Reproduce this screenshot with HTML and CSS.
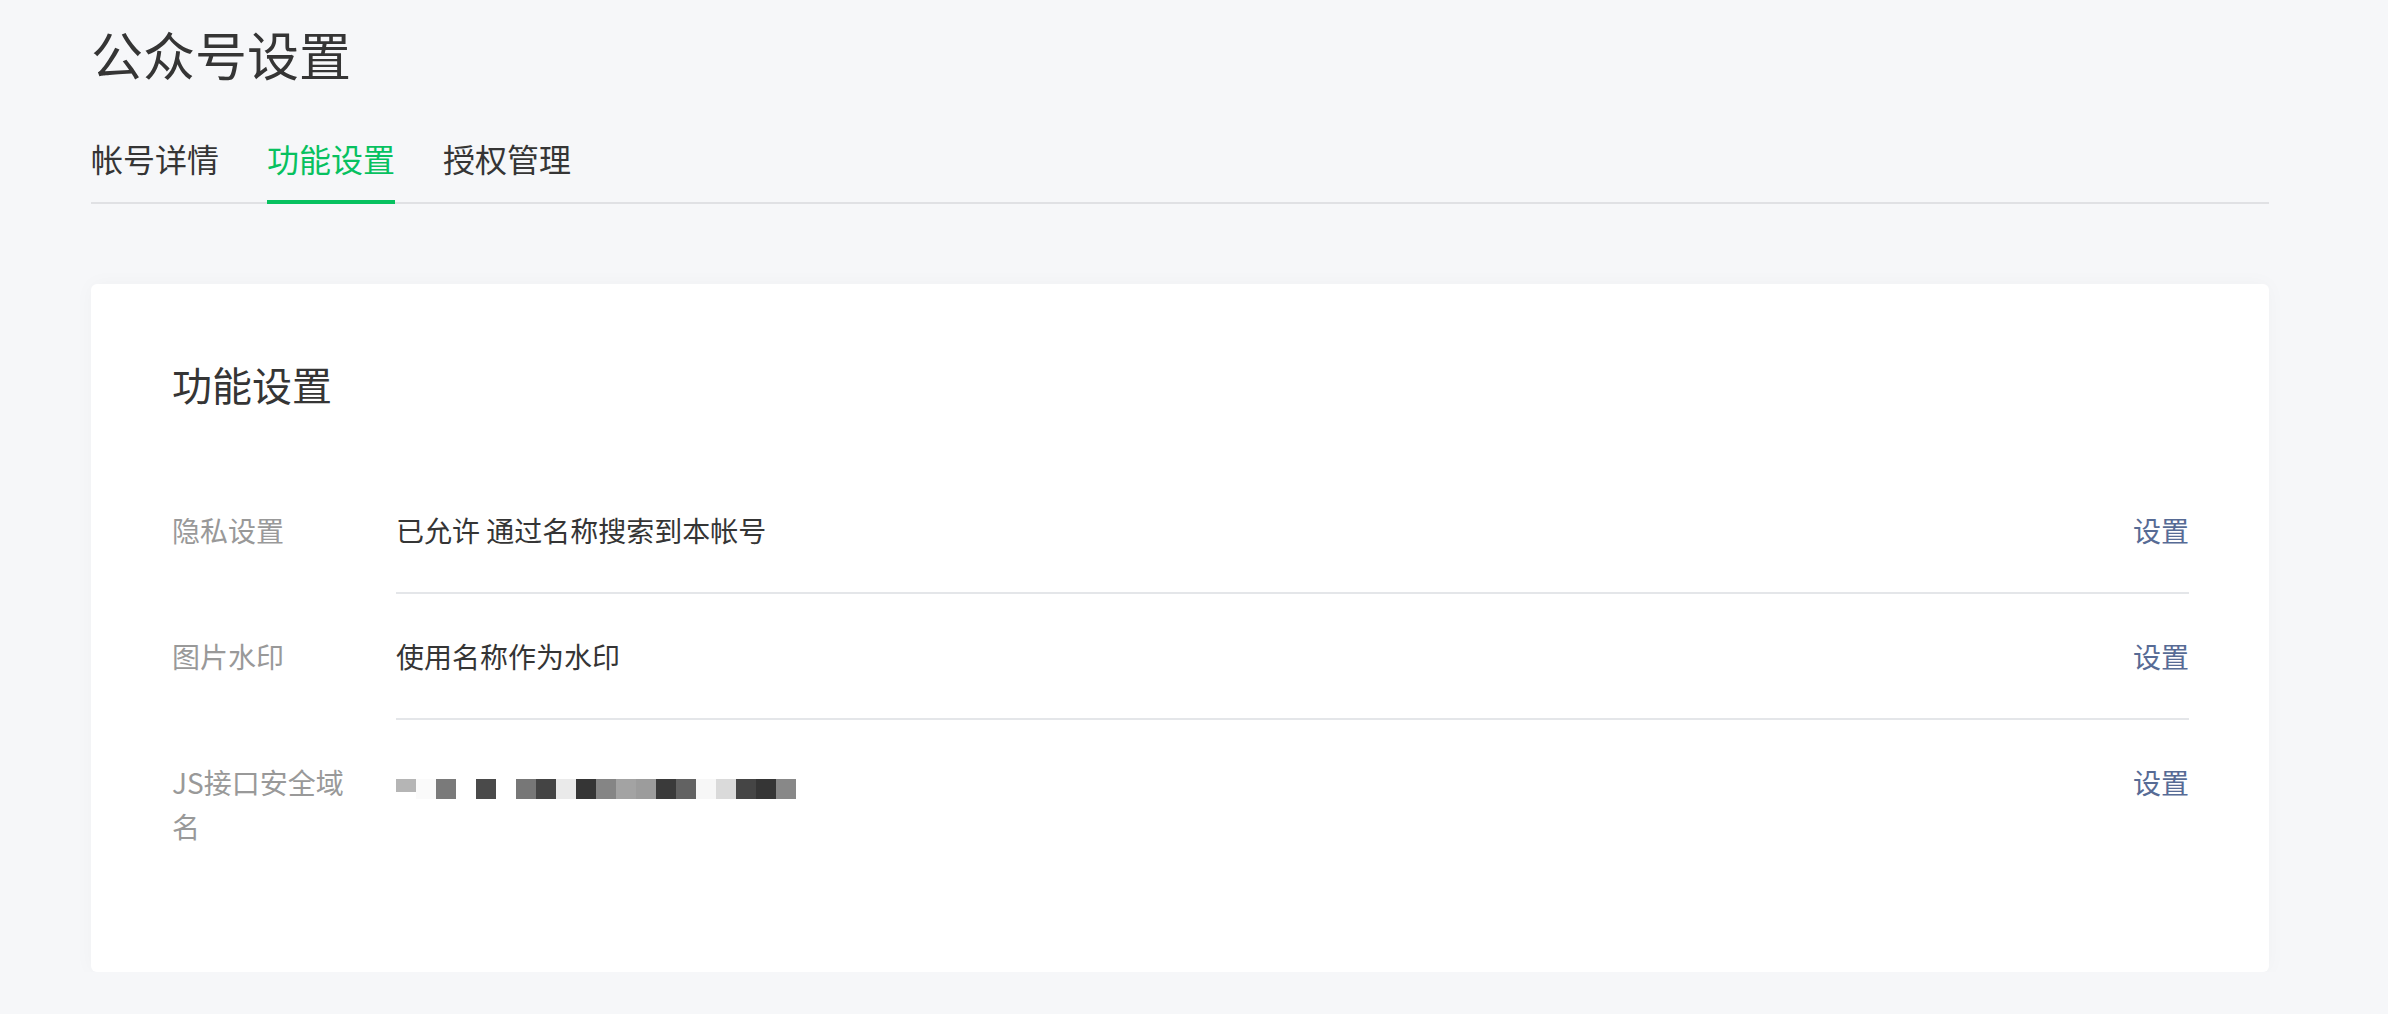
FILE: index.html
```html
<!DOCTYPE html>
<html lang="zh-CN">
<head>
<meta charset="utf-8">
<title>公众号设置</title>
<link rel="stylesheet" href="styles.css">
</head>
<body>
<div class="page">
  <h1 class="page-title">公众号设置</h1>
  <nav class="tabs">
    <div class="tab">帐号详情</div>
    <div class="tab active">功能设置</div>
    <div class="tab">授权管理</div>
  </nav>
  <section class="card">
    <h2 class="card-title">功能设置</h2>
    <div class="row">
      <div class="label">隐私设置</div>
      <div class="body">
        <div class="value">已允许 通过名称搜索到本帐号</div>
        <a class="link">设置</a>
      </div>
    </div>
    <div class="row">
      <div class="label">图片水印</div>
      <div class="body">
        <div class="value">使用名称作为水印</div>
        <a class="link">设置</a>
      </div>
    </div>
    <div class="row">
      <div class="label">JS接口安全域名</div>
      <div class="body last">
        <div class="value">
          <div class="mosaic">
            <span class="px short" style="background:#b5b5b5"></span>
            <span class="px" style="background:#fafafa"></span>
            <span class="px" style="background:#7a7a7a"></span>
            <span class="px" style="background:#ffffff"></span>
            <span class="px" style="background:#4a4a4a"></span>
            <span class="px" style="background:#ffffff"></span>
            <span class="px" style="background:#777777"></span>
            <span class="px" style="background:#444444"></span>
            <span class="px" style="background:#eaeaea"></span>
            <span class="px" style="background:#353535"></span>
            <span class="px" style="background:#858585"></span>
            <span class="px" style="background:#a3a3a3"></span>
            <span class="px" style="background:#9c9c9c"></span>
            <span class="px" style="background:#3a3a3a"></span>
            <span class="px" style="background:#626262"></span>
            <span class="px" style="background:#f7f7f7"></span>
            <span class="px" style="background:#dadada"></span>
            <span class="px" style="background:#454545"></span>
            <span class="px" style="background:#353535"></span>
            <span class="px" style="background:#888888"></span>
          </div>
        </div>
        <a class="link">设置</a>
      </div>
    </div>
  </section>
</div>
</body>
</html>
```
FILE: styles.css
```css
html, body {
  margin: 0;
  padding: 0;
  background: #f6f7f9;
  font-family: "Noto Sans CJK SC", "Noto Sans", sans-serif;
  color: #353535;
}

.page {
  width: 2178px;
  padding: 18px 0 0 91px;
}

.page-title {
  margin: 0;
  font-size: 52px;
  line-height: 72px;
  font-weight: 400;
  color: #353535;
}

.tabs {
  margin-top: 46px;
  display: flex;
  gap: 48px;
  border-bottom: 2px solid #e0e1e4;
}

.tab {
  position: relative;
  font-size: 32px;
  line-height: 44px;
  padding-bottom: 22px;
  color: #353535;
}

.tab.active {
  color: #07c160;
}

.tab.active::after {
  content: "";
  position: absolute;
  left: 0;
  right: 0;
  bottom: -2px;
  height: 4px;
  background: #07c160;
}

.card {
  margin-top: 80px;
  background: #ffffff;
  border-radius: 6px;
  box-shadow: 0 0 20px rgba(0, 0, 0, 0.03);
  padding: 80px 80px 84px 81px;
}

.card-title {
  margin: 0 0 64px 0;
  font-size: 40px;
  line-height: 40px;
  font-weight: 400;
  color: #353535;
}

.row {
  display: flex;
  align-items: flex-start;
  font-size: 28px;
  line-height: 44px;
}

.label {
  width: 180px;
  margin-right: 44px;
  flex-shrink: 0;
  padding: 40px 0;
  color: #999999;
}

.body {
  flex: 1;
  display: flex;
  align-items: flex-start;
  justify-content: space-between;
  padding: 40px 0;
  border-bottom: 2px solid #e4e6e9;
}

.body.last {
  border-bottom: none;
}

.value {
  color: #353535;
}

.link {
  color: #576b95;
  cursor: pointer;
}

.mosaic {
  display: flex;
  margin-top: 19px;
  height: 20px;
}

.px {
  display: block;
  width: 20px;
  height: 20px;
}

.px.short {
  height: 13px;
}
```
